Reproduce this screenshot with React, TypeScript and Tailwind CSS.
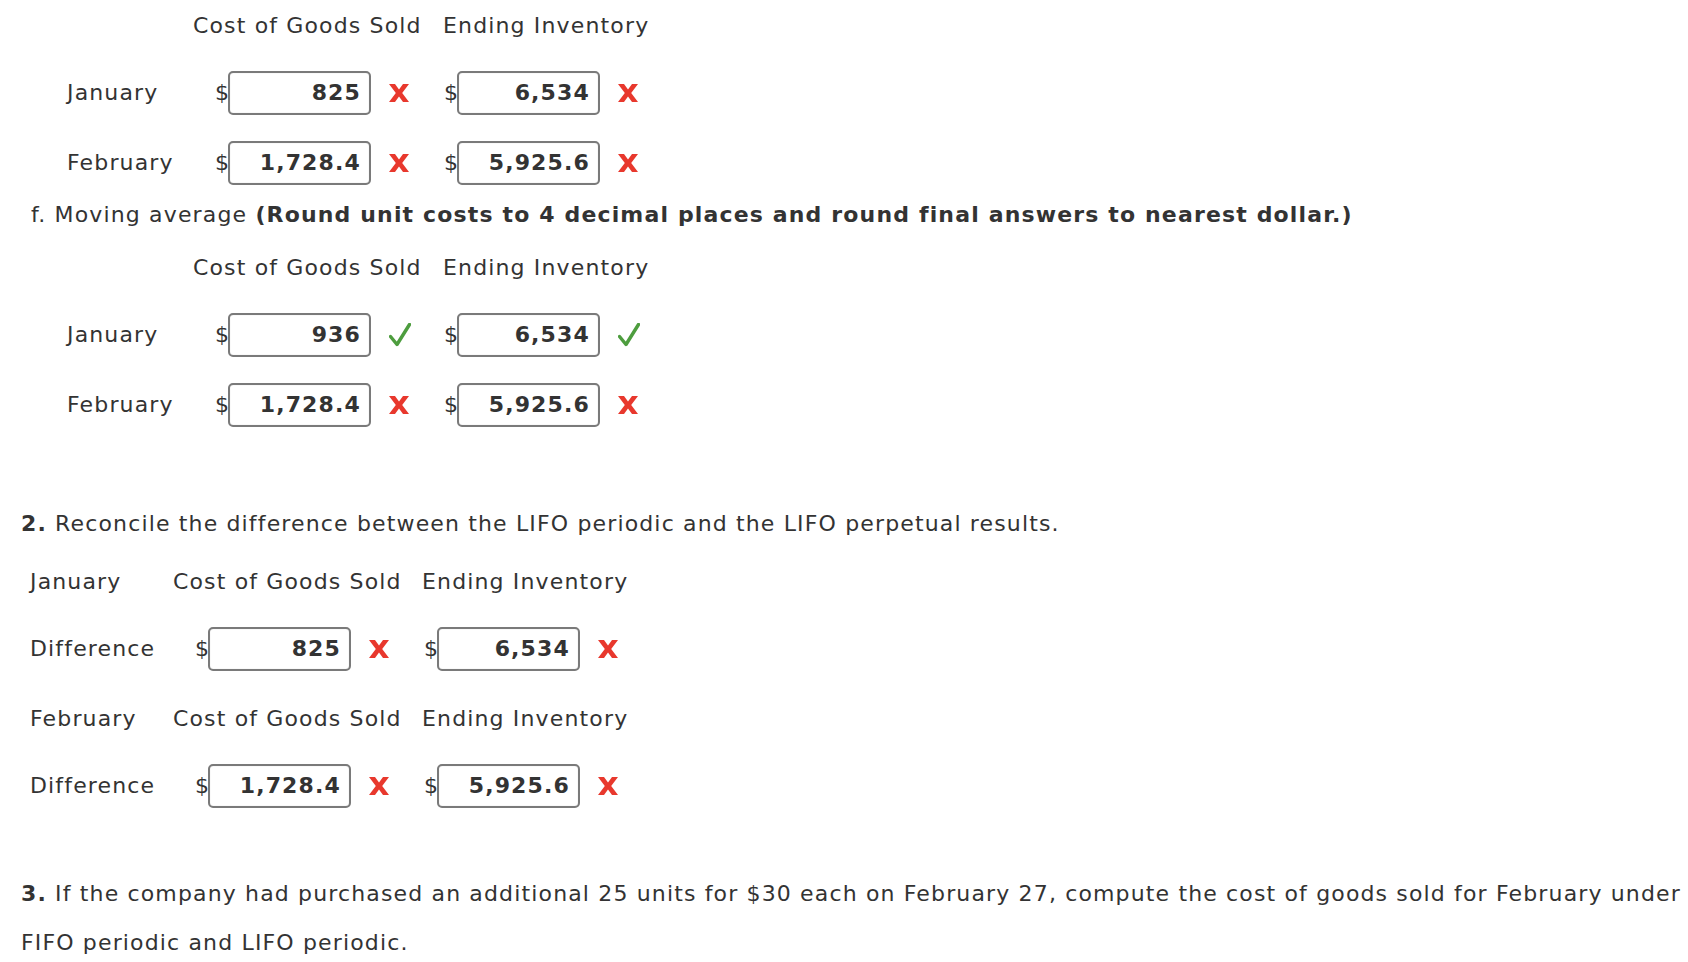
import React from "react";

type Mark = "x" | "check";

type Cell = { value: string; mark: Mark };

function XMark() {
  return (
    <svg width="20" height="18" viewBox="0 0 20 18" className="block">
      <polygon
        points="0,0 6,0 10,5.6 14,0 20,0 13.2,9 20,18 14,18 10,12.4 6,18 0,18 6.8,9"
        fill="#e8382d"
      />
    </svg>
  );
}

function CheckMark() {
  return (
    <svg width="22" height="24" viewBox="0 0 22 24" className="block">
      <path
        d="M1.5 13.5 L8 21.5 L20.5 1.5"
        fill="none"
        stroke="#4d9d3e"
        strokeWidth="3.4"
        strokeLinejoin="round"
        strokeLinecap="round"
      />
    </svg>
  );
}

function AnswerCell({ cell }: { cell: Cell }) {
  return (
    <div className="flex w-[229px] items-center">
      <span className="w-[13px]">$</span>
      <div className="flex h-[44px] w-[143px] items-center justify-end rounded-[5px] border-2 border-[#7a7a7a] bg-white pr-[8px] font-bold shadow-[inset_0_0_1px_rgba(0,0,0,0.25)]">
        {cell.value}
      </div>
      <div className="ml-[18px] flex w-[22px] items-center">
        {cell.mark === "x" ? <XMark /> : <CheckMark />}
      </div>
    </div>
  );
}

function Row({ label, cells, labelWidth }: { label: string; cells: Cell[]; labelWidth: string }) {
  return (
    <div className="flex items-center">
      <span className={labelWidth}>{label}</span>
      {cells.map((c, i) => (
        <AnswerCell key={i} cell={c} />
      ))}
    </div>
  );
}

function Headers({ lead }: { lead: string }) {
  return (
    <div className="flex whitespace-nowrap">
      <span className={lead}>Cost of Goods Sold</span>
      <span>Ending Inventory</span>
    </div>
  );
}

const wrong1: Cell[] = [
  { value: "825", mark: "x" },
  { value: "6,534", mark: "x" },
];
const wrong2: Cell[] = [
  { value: "1,728.4", mark: "x" },
  { value: "5,925.6", mark: "x" },
];

export default function App() {
  return (
    <main
      className="min-h-screen overflow-hidden bg-white text-[22px] leading-[26px] tracking-[1.15px] text-[#333333]"
      style={{ fontFamily: '"DejaVu Sans", Verdana, sans-serif' }}
    >
      {/* e. results (top) */}
      <div className="pl-[67px] pt-[13px]">
        <div className="pl-[126px]">
          <Headers lead="w-[250px]" />
        </div>
        <div className="mt-[32px]">
          <Row label="January" cells={wrong1} labelWidth="w-[148px]" />
        </div>
        <div className="mt-[26px]">
          <Row label="February" cells={wrong2} labelWidth="w-[148px]" />
        </div>
      </div>

      <p className="mt-[17px] whitespace-nowrap pl-[31px]">
        f. Moving average{" "}
        <strong className="font-bold">
          (Round unit costs to 4 decimal places and round final answers to nearest dollar.)
        </strong>
      </p>

      <div className="mt-[27px] pl-[67px]">
        <div className="pl-[126px]">
          <Headers lead="w-[250px]" />
        </div>
        <div className="mt-[32px]">
          <Row
            label="January"
            cells={[
              { value: "936", mark: "check" },
              { value: "6,534", mark: "check" },
            ]}
            labelWidth="w-[148px]"
          />
        </div>
        <div className="mt-[26px]">
          <Row label="February" cells={wrong2} labelWidth="w-[148px]" />
        </div>
      </div>

      {/* 2. reconcile */}
      <p className="mt-[84px] whitespace-nowrap pl-[21px]">
        <strong className="font-bold">2.</strong> Reconcile the difference between the LIFO periodic and the LIFO
        perpetual results.
      </p>

      <div className="pl-[30px]">
        <div className="mt-[32px] flex whitespace-nowrap">
          <span className="w-[143px]">January</span>
          <Headers lead="w-[249px]" />
        </div>
        <div className="mt-[32px]">
          <Row label="Difference" cells={wrong1} labelWidth="w-[165px]" />
        </div>
        <div className="mt-[35px] flex whitespace-nowrap">
          <span className="w-[143px]">February</span>
          <Headers lead="w-[249px]" />
        </div>
        <div className="mt-[32px]">
          <Row label="Difference" cells={wrong2} labelWidth="w-[165px]" />
        </div>
      </div>

      {/* 3. */}
      <p className="mt-[61px] whitespace-nowrap pl-[21px] leading-[49px]">
        <strong className="font-bold">3.</strong> If the company had purchased an additional 25 units for $30 each on
        February 27, compute the cost of goods sold for February under
        <br />
        FIFO periodic and LIFO periodic.
      </p>
    </main>
  );
}
